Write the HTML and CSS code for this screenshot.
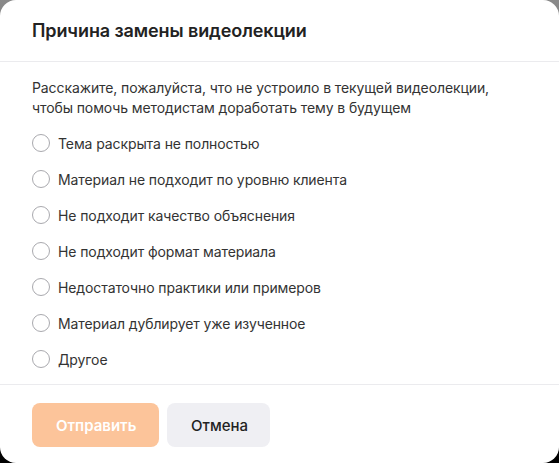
FILE: index.html
```html
<!DOCTYPE html>
<html lang="ru">
<head>
<meta charset="utf-8">
<link rel="stylesheet" href="styles.css">
</head>
<body>
<div class="modal">
  <div class="header"><h1 class="title">Причина замены видеолекции</h1></div>
  <div class="content">
    <p class="desc">Расскажите, пожалуйста, что не устроило в текущей видеолекции, чтобы помочь методистам доработать тему в будущем</p>
    <ul class="options">
      <li class="option"><span class="radio"></span><span>Тема раскрыта не полностью</span></li>
      <li class="option"><span class="radio"></span><span>Материал не подходит по уровню клиента</span></li>
      <li class="option"><span class="radio"></span><span>Не подходит качество объяснения</span></li>
      <li class="option"><span class="radio"></span><span>Не подходит формат материала</span></li>
      <li class="option"><span class="radio"></span><span>Недостаточно практики или примеров</span></li>
      <li class="option"><span class="radio"></span><span>Материал дублирует уже изученное</span></li>
      <li class="option"><span class="radio"></span><span>Другое</span></li>
    </ul>
  </div>
  <div class="footer">
    <button class="btn btn-primary">Отправить</button>
    <button class="btn btn-secondary">Отмена</button>
  </div>
</div>
</body>
</html>
```
FILE: styles.css
```css
html, body {
  margin: 0;
  height: 100%;
}
body {
  background: linear-gradient(180deg, #8a8a8a 0%, #444 50%, #000 100%);
  font-family: Inter, "Noto Sans", sans-serif;
  color: #2c2c2e;
}
.modal {
  background: #fff;
  height: 463px;
  border-radius: 16px;
  box-sizing: border-box;
  display: flex;
  flex-direction: column;
}
.header {
  flex: none;
  height: 62px;
  box-sizing: border-box;
  border-bottom: 1px solid #ebebee;
  padding: 0 32px;
  display: flex;
  align-items: center;
}
.title {
  margin: 0;
  font-size: 18px;
  font-weight: 600;
  color: #222;
  letter-spacing: -0.1px;
}
.content {
  flex: none;
  padding: 16px 32px 0;
  height: 323px;
  box-sizing: border-box;
  border-bottom: 1px solid #ebebee;
}
.desc {
  margin: 0 0 15px;
  font-size: 14px;
  line-height: 20px;
  color: #333;
  letter-spacing: -0.1px;
}
.options {
  list-style: none;
  margin: 0;
  padding: 0;
  display: flex;
  flex-direction: column;
  gap: 16px;
}
.option {
  display: flex;
  align-items: center;
  gap: 8px;
  height: 20px;
  font-size: 14px;
  color: #333;
  letter-spacing: -0.1px;
}
.radio {
  width: 18px;
  height: 18px;
  box-sizing: border-box;
  border: 1px solid #a9a9ae;
  border-radius: 50%;
  flex: none;
}
.footer {
  flex: none;
  padding: 18px 32px 0;
  display: flex;
  gap: 8px;
}
.btn {
  height: 44px;
  border: 0;
  border-radius: 8px;
  font-family: Inter, "Noto Sans", sans-serif;
  font-size: 15px;
  font-weight: 500;
  padding: 0 24px;
}
.btn-primary {
  background: #fcc49a;
  color: #fff;
  font-weight: 600;
  width: 127px;
}
.btn-secondary {
  background: #efeff3;
  color: #222;
  width: 103px;
}
```
